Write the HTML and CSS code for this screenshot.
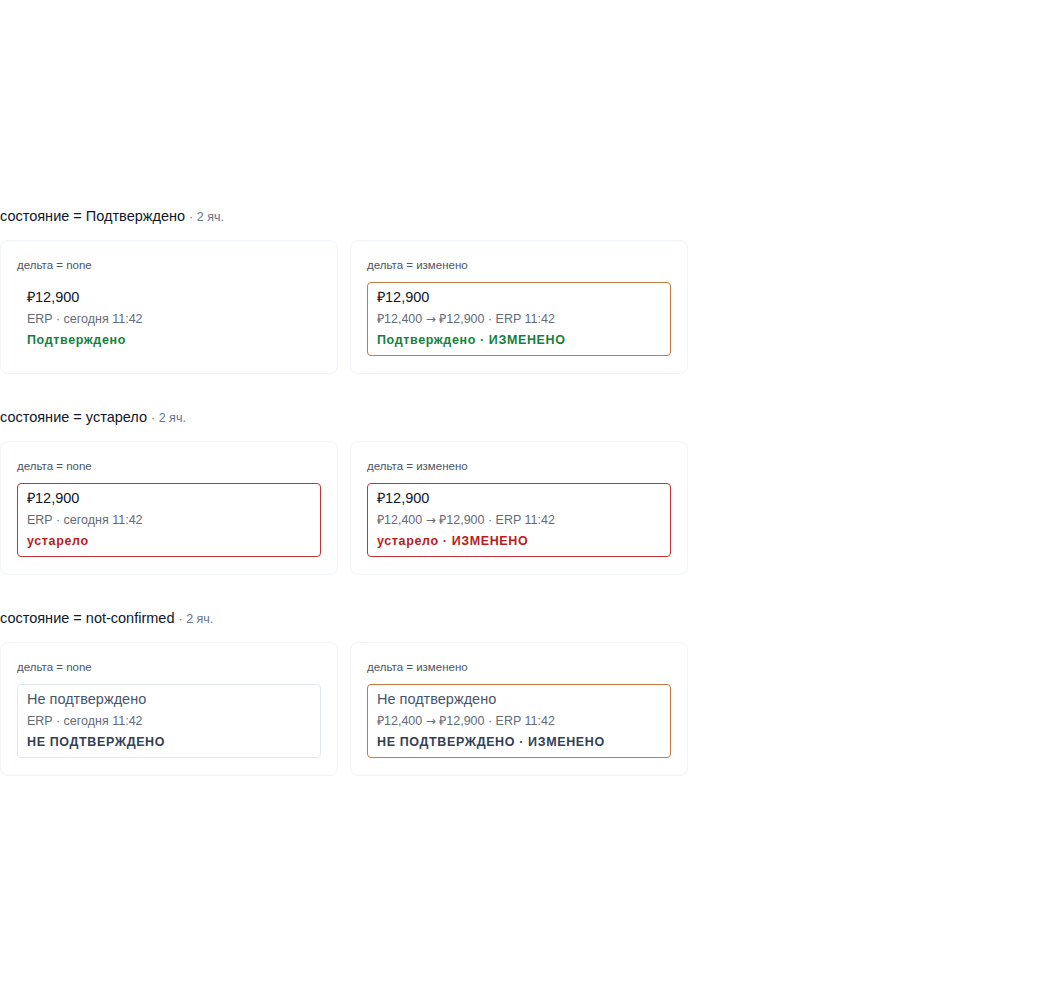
FILE: index.html
```html
<!DOCTYPE html>
<html lang="ru">
<head>
    <meta charset="UTF-8">
    <meta name="viewport" content="width=device-width, initial-scale=1.0">
    <title>Ячейка цены — состояния</title>
    <link rel="stylesheet" href="styles.css">
</head>
<body>
    <main class="matrix">
        <section class="state">
            <h2 class="state-title">состояние = Подтверждено <span class="state-count">· 2 яч.</span></h2>
            <div class="state-row">
                <div class="variant">
                    <div class="variant-label">дельта = none</div>
                    <div class="cell">
                        <div class="cell-value">₽12,900</div>
                        <div class="cell-meta">ERP · сегодня 11:42</div>
                        <div class="cell-status status-ok">Подтверждено</div>
                    </div>
                </div>
                <div class="variant">
                    <div class="variant-label">дельта = изменено</div>
                    <div class="cell cell-changed">
                        <div class="cell-value">₽12,900</div>
                        <div class="cell-meta">₽12,400 <span class="arrow">→</span> ₽12,900 · ERP 11:42</div>
                        <div class="cell-status status-ok">Подтверждено · ИЗМЕНЕНО</div>
                    </div>
                </div>
            </div>
        </section>

        <section class="state">
            <h2 class="state-title">состояние = устарело <span class="state-count">· 2 яч.</span></h2>
            <div class="state-row">
                <div class="variant">
                    <div class="variant-label">дельта = none</div>
                    <div class="cell cell-stale">
                        <div class="cell-value">₽12,900</div>
                        <div class="cell-meta">ERP · сегодня 11:42</div>
                        <div class="cell-status status-stale">устарело</div>
                    </div>
                </div>
                <div class="variant">
                    <div class="variant-label">дельта = изменено</div>
                    <div class="cell cell-stale">
                        <div class="cell-value">₽12,900</div>
                        <div class="cell-meta">₽12,400 <span class="arrow">→</span> ₽12,900 · ERP 11:42</div>
                        <div class="cell-status status-stale">устарело · ИЗМЕНЕНО</div>
                    </div>
                </div>
            </div>
        </section>

        <section class="state">
            <h2 class="state-title">состояние = not-confirmed <span class="state-count">· 2 яч.</span></h2>
            <div class="state-row">
                <div class="variant">
                    <div class="variant-label">дельта = none</div>
                    <div class="cell cell-pending">
                        <div class="cell-value value-muted">Не подтверждено</div>
                        <div class="cell-meta">ERP · сегодня 11:42</div>
                        <div class="cell-status status-pending">НЕ ПОДТВЕРЖДЕНО</div>
                    </div>
                </div>
                <div class="variant">
                    <div class="variant-label">дельта = изменено</div>
                    <div class="cell cell-changed">
                        <div class="cell-value value-muted">Не подтверждено</div>
                        <div class="cell-meta">₽12,400 <span class="arrow">→</span> ₽12,900 · ERP 11:42</div>
                        <div class="cell-status status-pending">НЕ ПОДТВЕРЖДЕНО · ИЗМЕНЕНО</div>
                    </div>
                </div>
            </div>
        </section>
    </main>
</body>
</html>
```

FILE: styles.css
```css
body {
    margin: 0;
    min-height: 100vh;
    display: flex;
    flex-direction: column;
    justify-content: center;
    font-family: "Liberation Sans", Arial, sans-serif;
    color: #0f172a;
    background: #ffffff;
}
.matrix {
    width: 688px;
    display: flex;
    flex-direction: column;
    gap: 34px;
}
.state-title {
    margin: 0 0 15px;
    font-size: 14.5px;
    font-weight: normal;
    line-height: 18px;
}
.state-count {
    font-size: 12.5px;
    line-height: 1;
    color: #64748b;
}
.state-row {
    display: grid;
    grid-template-columns: 1fr 1fr;
    gap: 12px;
}
.variant {
    border: 1px solid #f1f5f9;
    border-radius: 8px;
    padding: 16px 16px 17px;
}
.variant-label {
    font-size: 11.5px;
    line-height: 17px;
    color: #4b5563;
    margin-bottom: 8px;
}
/* the price cell itself */
.cell {
    border: 1px solid transparent;
    border-radius: 4px;
    padding: 5px 9px 7px;
}
.cell-changed {
    border-color: #c47a3c;
}
.cell-stale {
    border-color: #c53434;
}
.cell-pending {
    border-color: #e2e8f0;
}
.cell-value {
    font-size: 14.5px;
    line-height: 18px;
}
.value-muted {
    color: #475569;
}
.cell-meta {
    margin-top: 5px;
    font-size: 12.5px;
    line-height: 16px;
    color: #636b78;
}
.arrow {
    font-family: "DejaVu Sans", sans-serif;
    font-size: 12px;
    line-height: 1;
}
.cell-status {
    margin-top: 5px;
    font-size: 12.5px;
    line-height: 16px;
    font-weight: bold;
    letter-spacing: 0.05em;
}
.status-ok {
    color: #15803d;
}
.status-stale {
    color: #b91c1c;
}
.status-pending {
    color: #334155;
}
```
